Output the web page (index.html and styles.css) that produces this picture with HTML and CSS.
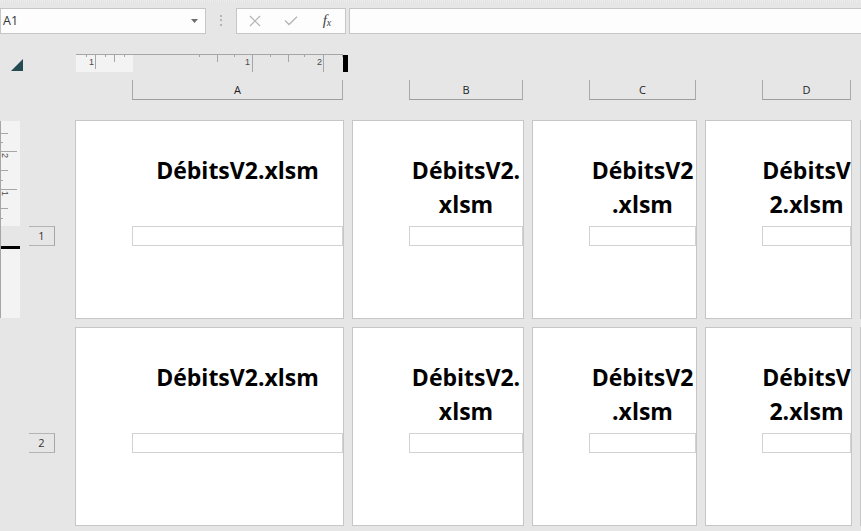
FILE: index.html
```html
<!DOCTYPE html>
<html lang="fr">
<head>
<meta charset="utf-8">
<title>Aperçu des sauts de page</title>
<link rel="stylesheet" href="styles.css">
</head>
<body>
<div class="app">
  <div class="topstrip"></div>
  <div class="formula-row">
    <div class="namebox">
      <span class="namebox-text">A1</span>
      <svg class="namebox-arrow" width="7" height="4" viewBox="0 0 7 4"><polygon points="0,0 7,0 3.5,4" fill="#6d6d6d"/></svg>
    </div>
    <div class="grip"><span></span><span></span><span></span></div>
    <div class="fxbox">
      <div class="fxslot">
        <svg width="12" height="12" viewBox="0 0 12 12"><path d="M1 1 L11 11 M11 1 L1 11" stroke="#b4b4b4" stroke-width="1.2" fill="none"/></svg>
      </div>
      <div class="fxslot">
        <svg width="14" height="10" viewBox="0 0 14 10"><path d="M1 4.5 L5 8.5 L13 0.8" stroke="#b4b4b4" stroke-width="1.3" fill="none"/></svg>
      </div>
      <div class="fxslot"><i class="fx">f<span>x</span></i></div>
    </div>
    <div class="formula"></div>
  </div>

  <div class="sheet">
    <div class="sheet-row ruler-row">
      <div class="gutter">
        <svg class="corner" width="12" height="12" viewBox="0 0 12 12"><polygon points="12,0 12,12 0,12" fill="#234b51"/></svg>
      </div>
      <div class="hruler-cell">
        <svg class="hruler" width="272" height="18" viewBox="0 0 272 18">
          <rect x="0" y="1" width="57" height="17" fill="#f3f3f3"/>
          <line x1="0" y1="0.5" x2="267" y2="0.5" stroke="#a6a6a6"/>
          <rect x="267" y="1" width="5" height="17" fill="#000"/>
          <g stroke="#a6a6a6" stroke-width="1">
            <line x1="10.5" y1="1" x2="10.5" y2="3"/>
            <line x1="19.5" y1="1" x2="19.5" y2="15"/>
            <line x1="29.5" y1="1" x2="29.5" y2="3"/>
            <line x1="38.5" y1="1" x2="38.5" y2="8"/>
            <line x1="48.5" y1="1" x2="48.5" y2="3"/>
            <line x1="123.5" y1="1" x2="123.5" y2="3"/>
            <line x1="141.5" y1="1" x2="141.5" y2="8"/>
            <line x1="158.5" y1="1" x2="158.5" y2="3"/>
            <line x1="176.5" y1="1" x2="176.5" y2="18"/>
            <line x1="194.5" y1="1" x2="194.5" y2="3"/>
            <line x1="212.5" y1="1" x2="212.5" y2="8"/>
            <line x1="228.5" y1="1" x2="228.5" y2="3"/>
            <line x1="247.5" y1="1" x2="247.5" y2="18"/>
            <line x1="266.5" y1="1" x2="266.5" y2="3"/>
          </g>
          <g class="ruler-num">
            <text x="18" y="11" text-anchor="end">1</text>
            <text x="174" y="11" text-anchor="end">1</text>
            <text x="246" y="11" text-anchor="end">2</text>
          </g>
        </svg>
      </div>
    </div>

    <div class="sheet-row header-row">
      <div class="gutter"></div>
      <div class="colhead-cell"><div class="colhead w-a">A</div></div>
      <div class="colhead-cell"><div class="colhead w-b">B</div></div>
      <div class="colhead-cell"><div class="colhead w-c">C</div></div>
      <div class="colhead-cell"><div class="colhead w-d">D</div></div>
      <div></div>
    </div>

    <div class="sheet-row page-row">
      <div class="gutter gutter-pages">
        <svg class="vruler" width="20" height="197" viewBox="0 0 20 197">
          <rect x="0" y="0" width="20" height="197" fill="#f3f3f3"/>
          <rect x="0" y="105" width="20" height="20" fill="#e6e6e6"/>
          <rect x="1" y="125" width="19" height="3" fill="#000"/>
          <line x1="0.5" y1="0" x2="0.5" y2="197" stroke="#a6a6a6"/>
          <g stroke="#a6a6a6">
            <line x1="1" y1="12.5" x2="8" y2="12.5"/>
            <line x1="1" y1="21.5" x2="3" y2="21.5"/>
            <line x1="1" y1="30.5" x2="17" y2="30.5"/>
            <line x1="1" y1="49.5" x2="8" y2="49.5"/>
            <line x1="1" y1="59.5" x2="3" y2="59.5"/>
            <line x1="1" y1="68.5" x2="17" y2="68.5"/>
            <line x1="1" y1="87.5" x2="8" y2="87.5"/>
            <line x1="1" y1="97.5" x2="3" y2="97.5"/>
          </g>
          <g class="ruler-num">
            <text transform="translate(2 32) rotate(90)">2</text>
            <text transform="translate(2 70) rotate(90)">1</text>
          </g>
        </svg>
        <div class="rowhead">1</div>
      </div>
      <div class="page"><div class="cell-text w-a">DébitsV2.xlsm</div><div class="cell-box w-a"></div></div>
      <div class="page"><div class="cell-text w-b">DébitsV2.<br>xlsm</div><div class="cell-box w-b"></div></div>
      <div class="page"><div class="cell-text w-c">DébitsV2<br>.xlsm</div><div class="cell-box w-c"></div></div>
      <div class="page"><div class="cell-text w-d">DébitsV<br>2.xlsm</div><div class="cell-box w-d"></div></div>
      <div class="page page-edge"></div>
    </div>

    <div class="sheet-row page-row">
      <div class="gutter gutter-pages">
        <div class="rowhead rowhead-solo">2</div>
      </div>
      <div class="page"><div class="cell-text w-a">DébitsV2.xlsm</div><div class="cell-box w-a"></div></div>
      <div class="page"><div class="cell-text w-b">DébitsV2.<br>xlsm</div><div class="cell-box w-b"></div></div>
      <div class="page"><div class="cell-text w-c">DébitsV2<br>.xlsm</div><div class="cell-box w-c"></div></div>
      <div class="page"><div class="cell-text w-d">DébitsV<br>2.xlsm</div><div class="cell-box w-d"></div></div>
      <div class="page page-edge"></div>
    </div>
  </div>
</div>
</body>
</html>
```

FILE: styles.css
```css
html, body {
  margin: 0;
  padding: 0;
  background: #e6e6e6;
  overflow: hidden;
}

body {
  width: 861px;
  height: 531px;
  font-family: "Open Sans", "Noto Sans", "Liberation Sans", sans-serif;
  color: #222;
}

.app {
  position: relative;
  width: 861px;
  height: 531px;
  overflow: hidden;
}

.topstrip {
  height: 3px;
  background: repeating-linear-gradient(90deg, #ebebeb 0 1px, #e4e4e4 1px 2px);
}

.formula-row {
  display: flex;
  margin-top: 5px;
  height: 26px;
}

.namebox {
  box-sizing: border-box;
  width: 206px;
  height: 26px;
  border: 1px solid #c6c6c6;
  background: #fdfdfd;
  display: flex;
  align-items: center;
  padding: 0 7px 0 2px;
}

.namebox-text {
  flex: 1;
  font-size: 12.5px;
  color: #333;
  line-height: 1;
}

.namebox-arrow {
  display: block;
}

.grip {
  width: 30px;
  display: flex;
  flex-direction: column;
  align-items: center;
  padding-top: 7px;
  gap: 2.4px;
}

.grip span {
  display: block;
  width: 2px;
  height: 2px;
  background: #b5b5b5;
}

.fxbox {
  box-sizing: border-box;
  width: 110px;
  height: 26px;
  border: 1px solid #c6c6c6;
  background: #fdfdfd;
  display: flex;
}

.fxslot {
  width: 36px;
  display: flex;
  align-items: center;
  justify-content: center;
}

.fxslot svg {
  display: block;
}

.fx {
  font-family: "Liberation Serif", "DejaVu Serif", serif;
  font-size: 15px;
  color: #444;
  line-height: 1;
  margin-top: -2px;
}

.fx span {
  font-size: 10px;
  margin-left: 0;
  position: relative;
  top: 1px;
}

.formula {
  box-sizing: border-box;
  flex: 1;
  margin-left: 3px;
  margin-right: -2px;
  height: 26px;
  border: 1px solid #c6c6c6;
  background: #fdfdfd;
}

.sheet {
  display: flex;
  flex-direction: column;
}

.sheet-row {
  display: grid;
  grid-template-columns: 67px 269px 172px 165px 147px 1fr;
  column-gap: 8px;
}

.ruler-row {
  height: 46px;
}

.corner {
  display: block;
  margin: 25px 0 0 11px;
}

.hruler {
  display: block;
  margin: 20px 0 0 1px;
}

.ruler-num text {
  font-family: "Liberation Sans", "DejaVu Sans", sans-serif;
  font-size: 9px;
  fill: #4a4a4a;
}

.header-row {
  height: 20px;
  margin-bottom: 20px;
}

.colhead-cell {
  padding-left: 57px;
}

.colhead {
  box-sizing: border-box;
  height: 20px;
  border-left: 1px solid #a9a9a9;
  border-right: 1px solid #a9a9a9;
  border-bottom: 1px solid #9e9e9e;
  font-size: 11px;
  line-height: 19px;
  text-align: center;
  color: #1e1e1e;
}

.w-a { width: 211px; }
.w-b { width: 114px; }
.w-c { width: 107px; }
.w-d { width: 89px; }

.page-row {
  height: 199px;
  margin-bottom: 8px;
}

.gutter-pages {
  display: flex;
  align-items: flex-start;
}

.vruler {
  display: block;
  margin-top: 1px;
}

.rowhead {
  box-sizing: border-box;
  width: 26px;
  height: 20px;
  margin: 106px 0 0 9px;
  border-top: 1px solid #b4b4b4;
  border-right: 1px solid #a6a6a6;
  border-bottom: 1px solid #b4b4b4;
  font-size: 11px;
  line-height: 18px;
  text-align: center;
  color: #333;
}

.rowhead-solo {
  margin-left: 29px;
}

.page {
  box-sizing: border-box;
  height: 199px;
  border: 1px solid #c6c6c6;
  background: #fff;
  padding: 32px 0 0 56px;
  overflow: hidden;
}

.page-edge {
  padding: 0;
  min-width: 2px;
}

.cell-text {
  height: 73px;
  font-family: "Open Sans", "Noto Sans", sans-serif;
  font-weight: 700;
  font-size: 23px;
  line-height: 34px;
  text-align: center;
  color: #000;
  white-space: nowrap;
}

.cell-box {
  box-sizing: border-box;
  height: 20px;
  border: 1px solid #d2d2d2;
}
```
